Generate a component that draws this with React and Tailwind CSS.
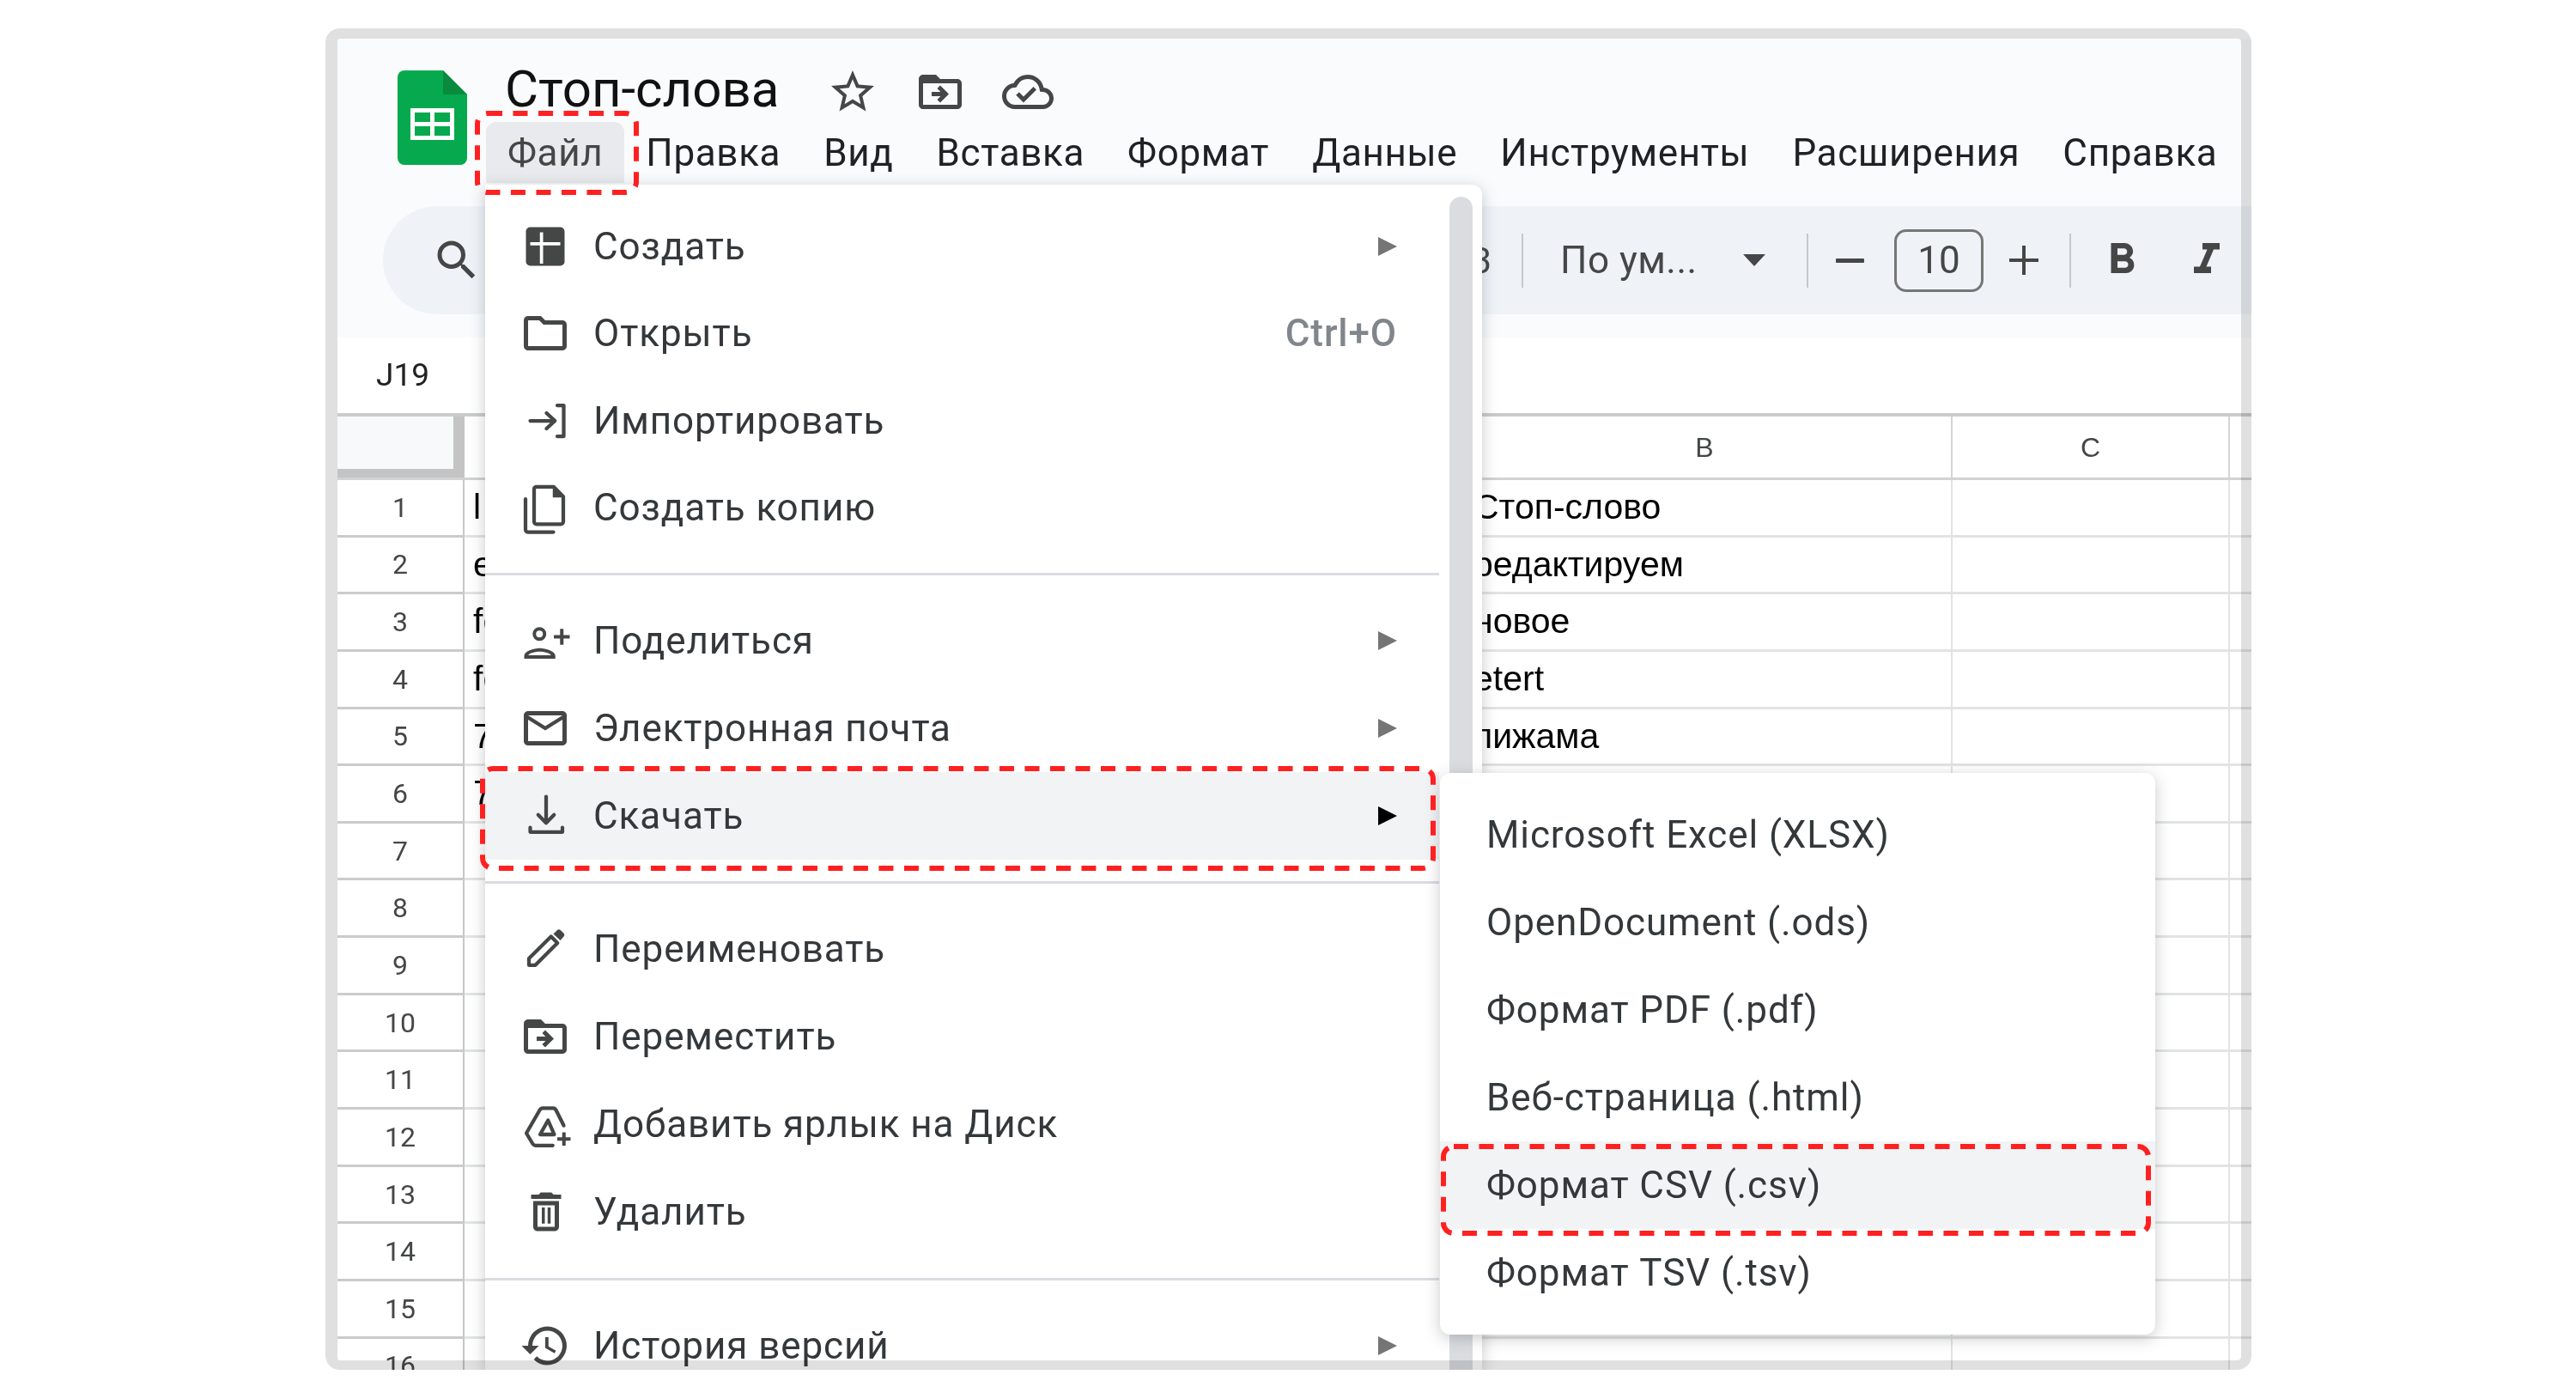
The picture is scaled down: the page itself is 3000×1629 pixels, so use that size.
import React from "react";

const ink = "#444746";

const Icon = ({ children, size = "w-[60px] h-[60px]", className = "" }) => (
    <svg viewBox="0 0 24 24" fill={ink} className={`${size} shrink-0 overflow-visible ${className}`}>
        {children}
    </svg>
);

const Stroke = ({ d, w = 1.7 }) => <path d={d} fill="none" stroke={ink} strokeWidth={w} strokeLinejoin="round" strokeLinecap="round" />;

const icons = {
    create: (
        <>
            <path d="M19 3H5a2 2 0 0 0-2 2v14a2 2 0 0 0 2 2h14a2 2 0 0 0 2-2V5a2 2 0 0 0-2-2z" />
            <path d="M5 10h14v1.5H5z" fill="#fff" />
            <path d="M9.5 5.4H11V20H9.5z" fill="#fff" />
        </>
    ),
    open: <path d="M9.17 6l2 2H20v10H4V6h5.17M10 4H4c-1.1 0-1.99.9-1.99 2L2 18c0 1.1.9 2 2 2h16c1.1 0 2-.9 2-2V8c0-1.1-.9-2-2-2h-8l-2-2z" />,
    importFile: (
        <>
            <Stroke d="M5 12h11.5M12.6 8.4l3.9 3.6-3.9 3.6" />
            <Stroke d="M17.6 4.8h3v14.4h-3" />
        </>
    ),
    copy: (
        <>
            <Stroke d="M6.8 3.4c0-.6.5-1.1 1.1-1.1h8l4.5 4.6v11.7c0 .6-.5 1.1-1.1 1.1H7.9c-.6 0-1.1-.5-1.1-1.1z" />
            <path d="M15.5 2.3v5h5z" />
            <Stroke d="M2.8 8v14.3c0 .6.5 1.1 1.1 1.1H15.8" />
        </>
    ),
    share: (
        <>
            <circle cx="9.3" cy="8.9" r="2.4" fill="none" stroke={ink} strokeWidth="1.6" />
            <path d="M2.2 20.4v-1.3c0-2.2 4.3-3.6 7.2-3.6s7.3 1.4 7.3 3.6v1.3zm1.9-1.6h10.6c-.4-1-3.2-1.7-5.3-1.7s-4.9.7-5.3 1.7z" />
            <path d="M18.9 6.5h1.6v2.9h2.9V11h-2.9v2.9h-1.6V11H16V9.4h2.9z" />
        </>
    ),
    mail: <path d="M20 4H4c-1.1 0-1.99.9-1.99 2L2 18c0 1.1.9 2 2 2h16c1.1 0 2-.9 2-2V6c0-1.1-.9-2-2-2zm0 14H4V8l8 5 8-5v10zm-8-7L4 6h16l-8 5z" />,
    download: (
        <>
            <Stroke d="M12.4 3v12.2M8.7 11.5l3.7 3.8 3.7-3.8" />
            <Stroke d="M5 17.4v2.1h15v-2.1" />
        </>
    ),
    rename: (
        <>
            <Stroke d="M4.4 16.4 14.7 6.2l3 3L7.4 19.5H4.4z" />
            <path d="M15.8 5l1.7-1.7a1.2 1.2 0 0 1 1.7 0l1.3 1.3a1.2 1.2 0 0 1 0 1.7L19 8z" />
        </>
    ),
    move: <path d="M20 6h-8l-2-2H4c-1.1 0-1.99.9-1.99 2L2 18c0 1.1.9 2 2 2h16c1.1 0 2-.9 2-2V8c0-1.1-.9-2-2-2zm0 12H4V8h16v10zm-8.01-9l-1.41 1.41L12.16 12H8v2h4.16l-1.59 1.59L11.99 17 16 13.01 11.99 9z" />,
    shortcut: (
        <>
            <Stroke d="M20.6 12.6 17 5.4c-.3-.6-.7-.9-1.3-.9h-4.9c-.6 0-1 .3-1.3.8L3.2 16.2l3 5c.3.5.7.7 1.2.7h8.1" />
            <Stroke d="M13.3 10.2 9.6 16.8h6.6z" />
            <path d="M19.9 15.8h1.6v2.3h2.3v1.6h-2.3V22h-1.6v-2.3h-2.3v-1.6h2.3z" />
        </>
    ),
    trash: (
        <g transform="translate(.4 0)">
            <path d="M16 9v10H8V9h8m-1.5-6h-5l-1 1H5v2h14V4h-3.500l-1-1zM18 7H6v12c0 1.1.9 2 2 2h8c1.1 0 2-.9 2-2V7z" />
            <path d="M10 10h1.4v7.5H10zM12.7 10h1.4v7.5h-1.4z" />
        </g>
    ),
    history: <path d="M13 3a9 9 0 0 0-9 9H1l3.89 3.89.07.14L9 12H6c0-3.87 3.13-7 7-7s7 3.13 7 7-3.13 7-7 7c-1.93 0-3.68-.79-4.94-2.06l-1.42 1.42A8.954 8.954 0 0 0 13 21a9 9 0 0 0 0-18zm-1 5v5l4.28 2.54.72-1.21-3.5-2.08V8H12z" />,
};

const Logo = () => (
    <svg viewBox="0 0 81 110" className="w-[81px] h-[110px] shrink-0 mt-[8px]">
        <path d="M8 0H53L81 28V102a8 8 0 0 1-8 8H8a8 8 0 0 1-8-8V8a8 8 0 0 1 8-8z" fill="#06a94d" />
        <path d="M53 0V28H81z" fill="#0a8a3d" />
        <rect x="15" y="44" width="51" height="37" fill="#fff" />
        <rect x="20" y="49" width="18" height="11" fill="#06a94d" />
        <rect x="43" y="49" width="18" height="11" fill="#06a94d" />
        <rect x="20" y="65" width="18" height="11" fill="#06a94d" />
        <rect x="43" y="65" width="18" height="11" fill="#06a94d" />
    </svg>
);

const navItems = ["Файл", "Правка", "Вид", "Вставка", "Формат", "Данные", "Инструменты", "Расширения", "Справка"];

const Header = () => (
    <header className="h-[348px] bg-[#f9fbfd] flex flex-col shrink-0">
        <div className="h-[195px] flex pl-[70px] pt-[29px]">
            <Logo />
            <div className="ml-[46px]">
                <div className="h-[60px] flex items-center">
                    <h1 className="text-[60px] leading-none text-[#111] -ml-[2px]">Стоп-слова</h1>
                    <div className="flex gap-[42px] ml-[56px] mt-[6px]">
                        <Icon>
                            <path d="M22 9.24l-7.19-.62L12 2 9.19 8.63 2 9.24l5.46 4.73L5.82 21 12 17.27 18.18 21l-1.63-7.03L22 9.24zM12 15.4l-3.76 2.27 1-4.28-3.32-2.88 4.38-.38L12 6.1l1.71 4.04 4.38.38-3.32 2.88 1 4.28L12 15.4z" />
                        </Icon>
                        <Icon>{icons.move}</Icon>
                        <Icon>
                            <path d="M19.35 10.04A7.49 7.49 0 0 0 12 4C9.11 4 6.6 5.64 5.35 8.04A5.994 5.994 0 0 0 0 14c0 3.31 2.69 6 6 6h13c2.76 0 5-2.24 5-5 0-2.64-2.05-4.78-4.65-4.96zM19 18H6c-2.21 0-4-1.79-4-4 0-2.05 1.53-3.76 3.56-3.97l1.07-.11.5-.95A5.469 5.469 0 0 1 12 6c2.62 0 4.88 1.86 5.39 4.43l.3 1.5 1.53.11A2.98 2.98 0 0 1 22 15c0 1.65-1.35 3-3 3zm-9-3.82l-2.09-2.09L6.5 13.5 10 17l6.01-6.01-1.41-1.41z" />
                        </Icon>
                    </div>
                </div>
                <nav className="flex mt-[8px] -ml-[24px]">
                    {navItems.map((item, i) => (
                        <div
                            key={item}
                            className={`h-[71px] px-[25px] flex items-center text-[44px] tracking-[0.65px] whitespace-nowrap ${i === 0 ? "bg-[#e8eaed] rounded-t-[12px] text-[#444746]" : "text-[#202124]"}`}
                        >
                            {item}
                        </div>
                    ))}
                </nav>
            </div>
        </div>
        <div className="h-[126px] ml-[53px] bg-[#eff3f8] rounded-l-[63px] flex items-center pl-[56px] pr-[22px]">
            <Icon>
                <path d="M15.5 14h-.79l-.28-.27A6.471 6.471 0 0 0 16 9.5 6.5 6.5 0 1 0 9.5 16c1.61 0 3.09-.59 4.23-1.57l.27.28v.79l5 4.99L20.49 19l-4.99-5zm-6 0C7.01 14 5 11.99 5 9.5S7.01 5 9.5 5 14 7.01 14 9.5 11.99 14 9.5 14z" />
            </Icon>
            <div className="ml-auto text-[42px] text-[#444746]">3</div>
            <div className="w-[2px] h-[63px] bg-[#c7c7c7] ml-[35px]" />
            <div className="w-[239px] ml-[43px] flex items-center justify-between text-[44px] text-[#444746] tracking-[0.5px]">
                <span>По ум...</span>
                <svg viewBox="0 0 26 14" className="w-[26px] h-[14px]">
                    <path d="M0 0H26L13 14z" fill={ink} />
                </svg>
            </div>
            <div className="w-[2px] h-[63px] bg-[#c7c7c7] ml-[48px]" />
            <div className="w-[33px] h-[5px] bg-[#444746] ml-[32px] rounded-[1px]" />
            <div className="w-[104px] h-[73px] ml-[35px] border-[3px] border-[#747775] rounded-[14px] flex items-center justify-center text-[44px] text-[#444746]">10</div>
            <svg viewBox="0 0 34 34" className="w-[34px] h-[34px] ml-[30px]">
                <path d="M15 0h4v15h15v4H19v15h-4V19H0v-4h15z" fill={ink} />
            </svg>
            <div className="w-[2px] h-[63px] bg-[#c7c7c7] ml-[36px]" />
            <Icon className="ml-[29px]">
                <path d="M15.6 10.79c.97-.67 1.65-1.77 1.65-2.79 0-2.26-1.75-4-4-4H7v14h7.04c2.09 0 3.71-1.7 3.71-3.79 0-1.52-.86-2.82-2.15-3.42zM10 6.5h3c.83 0 1.5.67 1.5 1.5s-.67 1.5-1.5 1.5h-3v-3zm3.5 9H10v-3h3.5c.83 0 1.5.67 1.5 1.5s-.67 1.5-1.5 1.5z" />
            </Icon>
            <Icon className="ml-[39px]">
                <path d="M10 4v3h2.21l-3.42 8H6v3h8v-3h-2.21l3.42-8H18V4z" />
            </Icon>
        </div>
    </header>
);

const colA = ["l", "e", "fo", "fo", "7", "7"];
const colB = ["Стоп-слово", "редактируем", "новое", "etert", "пижама"];
const rows = Array.from({ length: 16 }, (_, i) => i + 1);

const Sheet = () => (
    <div className="flex-1 bg-white">
        <div className="h-[92px] border-b-[4px] border-[#c9cbcc] flex items-center pl-[45px] text-[37px] text-[#222]">J19</div>
        <div className="grid grid-cols-[148px_1157px_576px_323px_1fr] h-[74px] border-b-[3px] border-[#d0d2d3] text-[32px] text-[#444746] font-['Liberation_Sans',sans-serif]">
            <div className="h-[71px] bg-[#f8f9fa] border-r-[13px] border-b-[10px] border-[#c4c4c4]" />
            <div />
            <div className="flex items-center justify-center border-r-[2px] border-[#d3d5d6]">B</div>
            <div className="flex items-center justify-center border-r-[2px] border-[#d3d5d6]">C</div>
            <div />
        </div>
        {rows.map((n) => (
            <div key={n} className="grid grid-cols-[148px_1157px_576px_323px_1fr] h-[66.65px] font-['Liberation_Sans',sans-serif] text-[41px] text-black">
                <div className="flex items-center justify-center border-r-[2px] border-b-[3px] border-r-[#c7c7c7] border-b-[#cbcbcb] text-[32px] text-[#444746] font-['Roboto',sans-serif]">{n}</div>
                <div className="flex items-center pl-[10px] border-b-[3px] border-[#e2e3e3] overflow-hidden">{colA[n - 1]}</div>
                <div className="flex items-center pl-[18px] border-b-[3px] border-r-[2px] border-[#e2e3e3] overflow-hidden">{colB[n - 1]}</div>
                <div className="border-b-[3px] border-r-[2px] border-[#e2e3e3]" />
                <div className="border-b-[3px] border-[#e2e3e3]" />
            </div>
        ))}
    </div>
);

const Arrow = ({ dark }) => (
    <svg viewBox="0 0 22 22" className="w-[22px] h-[22px] ml-auto">
        <path d="M0 0L22 11L0 22z" fill={dark ? "#000" : "#757575"} />
    </svg>
);

const MenuRow = ({ icon, label, shortcut, sub, active, short }) => (
    <div className={`flex items-center pl-[40px] pr-[49px] ${short ? "h-[101.5px]" : "h-[102px]"} ${active ? "bg-[#f1f3f4]" : ""}`}>
        <Icon className="mr-[26px]">{icons[icon]}</Icon>
        <span>{label}</span>
        {shortcut && <span className="ml-auto text-[#80868b] font-medium">{shortcut}</span>}
        {sub && <Arrow dark={active} />}
    </div>
);

const Sep = ({ className }) => (
    <div className={`flex items-center ${className}`}>
        <div className="h-[3px] w-full bg-[#dadce0]" />
    </div>
);

const FileMenu = () => (
    <div className="absolute left-[186px] top-[182px] w-[1161px] h-[1380px] overflow-hidden bg-white rounded-tr-[12px] shadow-[0_4px_18px_rgba(60,64,67,0.28)] pt-[21px] pr-[50px] text-[44px] text-[#35383b] tracking-[0.9px]">
        <MenuRow short icon="create" label="Создать" sub />
        <MenuRow short icon="open" label="Открыть" shortcut="Ctrl+O" />
        <MenuRow short icon="importFile" label="Импортировать" />
        <MenuRow short icon="copy" label="Создать копию" />
        <Sep className="h-[53px]" />
        <MenuRow icon="share" label="Поделиться" sub />
        <MenuRow icon="mail" label="Электронная почта" sub />
        <MenuRow icon="download" label="Скачать" sub active />
        <Sep className="h-[53px]" />
        <MenuRow icon="rename" label="Переименовать" />
        <MenuRow icon="move" label="Переместить" />
        <MenuRow icon="shortcut" label="Добавить ярлык на Диск" />
        <MenuRow icon="trash" label="Удалить" />
        <Sep className="h-[54px]" />
        <MenuRow icon="history" label="История версий" sub />
        {/* scrollbar */}
        <div className="absolute left-[1123px] top-[14px] bottom-0 w-[27px] bg-[#dadce0] rounded-t-full" />
    </div>
);

const downloadFormats = [
    "Microsoft Excel (XLSX)",
    "OpenDocument (.ods)",
    "Формат PDF (.pdf)",
    "Веб-страница (.html)",
    "Формат CSV (.csv)",
    "Формат TSV (.tsv)",
];

const DownloadMenu = () => (
    <div className="absolute left-[1298px] top-[867px] w-[833px] h-[654px] bg-white rounded-[12px] shadow-[0_4px_18px_rgba(60,64,67,0.28)] py-[21px] text-[44px] text-[#35383b] tracking-[0.9px]">
        {downloadFormats.map((f, i) => (
            <div key={f} className={`h-[102px] flex items-center pl-[54px] ${i === 4 ? "bg-[#f1f3f4]" : ""}`}>
                {f}
            </div>
        ))}
    </div>
);

// red annotation drawn over the screenshot
const Callout = ({ w, h, className }) => (
    <svg width={w} height={h} className={`absolute ${className}`}>
        <rect x="3" y="3" width={w - 6} height={h - 6} rx="12" fill="none" stroke="#ff2020" strokeWidth="6" strokeDasharray="17 12.5" />
    </svg>
);

export default function App() {
    return (
        <div className="w-[3000px] h-[1629px] bg-white pt-[33px] pl-[379px] font-['Roboto',sans-serif] overflow-hidden">
            <div className="relative w-[2243px] h-[1562px] rounded-[16px] overflow-hidden bg-white pl-[14px] pt-[12px] flex flex-col">
                <Header />
                <Sheet />
                <FileMenu />
                <DownloadMenu />
                {/* grey window frame, content shows through it */}
                <div className="absolute inset-0 border-l-[14px] border-t-[12px] border-r-[12px] border-b-[11px] border-[#e0e0e0] rounded-[16px] mix-blend-multiply pointer-events-none" />
                <Callout w={191} h={98} className="left-[174px] top-[96px]" />
                <Callout w={1113} h={122} className="left-[180px] top-[859px]" />
                <Callout w={827} h={107} className="left-[1299px] top-[1299px]" />
            </div>
        </div>
    );
}
